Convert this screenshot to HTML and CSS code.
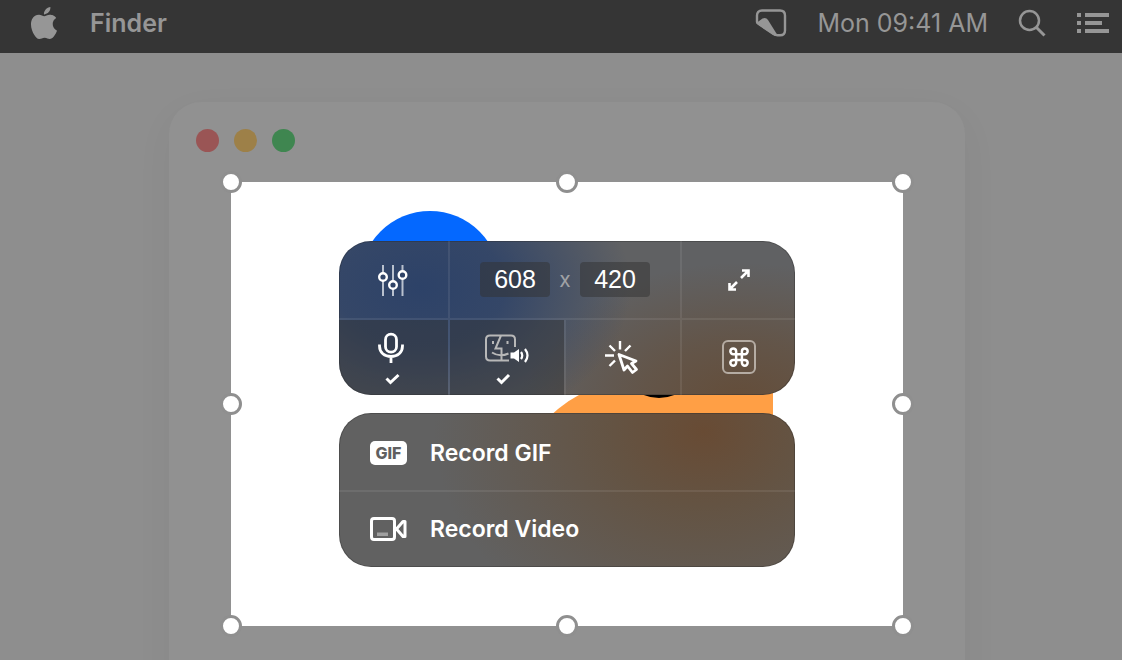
FILE: index.html
```html
<!DOCTYPE html>
<html lang="en">
<head>
    <meta charset="UTF-8">
    <meta name="viewport" content="width=device-width, initial-scale=1.0">
    <title>Screen recorder</title>
    <link rel="stylesheet" href="styles.css">
</head>
<body>
<header class="menubar">
    <button class="menu-item" type="button" aria-label="Apple menu">
        <svg width="28" height="32" viewBox="1.5 0 21 24">
            <path fill="currentColor" d="M12.152 6.896c-.948 0-2.415-1.078-3.96-1.04-2.04.027-3.91 1.183-4.961 3.014-2.117 3.675-.546 9.103 1.519 12.09 1.013 1.454 2.208 3.09 3.792 3.039 1.52-.065 2.09-.987 3.935-.987 1.831 0 2.35.987 3.96.948 1.637-.026 2.676-1.48 3.676-2.948 1.156-1.688 1.636-3.325 1.662-3.415-.039-.013-3.182-1.221-3.22-4.857-.026-3.04 2.48-4.494 2.597-4.559-1.429-2.09-3.623-2.324-4.39-2.376-2-.156-3.675 1.09-4.61 1.09zM15.53 3.83c.843-1.012 1.4-2.427 1.245-3.83-1.207.052-2.662.805-3.532 1.818-.78.896-1.454 2.338-1.273 3.714 1.338.104 2.715-.688 3.559-1.701"/>
        </svg>
    </button>
    <button class="menu-item app-name" type="button">Finder</button>
    <div class="status">
        <button class="menu-item" type="button" aria-label="Recorder">
            <svg width="32" height="28" viewBox="0 0 32 28">
                <path fill="none" stroke="currentColor" stroke-width="2.4" stroke-linejoin="round" d="M2 13V6.500Q2 1.500 7 1.500H25Q30 1.500 30 6.500V21.500Q30 26.300 25 26.300H22.500Q20.500 26.300 18.500 25L3 14.500Q2 14 2 13Z"/>
                <path fill="currentColor" d="M2 13.500L7.500 9.500Q11 8 13 11L23 27H20L3 15.500Z"/>
            </svg>
        </button>
        <time class="clock">Mon 09:41 AM</time>
        <button class="menu-item" type="button" aria-label="Search">
            <svg width="28" height="28" viewBox="0 0 28 28" fill="none" stroke="currentColor">
                <circle cx="11.500" cy="11.500" r="9.500" stroke-width="2.500"/>
                <path stroke-width="3" d="M18.500 18.500L26.500 26.500"/>
            </svg>
        </button>
        <button class="menu-item" type="button" aria-label="Notification centre">
            <svg width="34" height="20" viewBox="0 0 34 20" fill="currentColor">
                <path d="M1 0h4v4H1zM1 8h4v4H1zM1 16h4v4H1zM9 0h24v4H9zM9 8h17v4H9zM9 16h24v4H9z"/>
            </svg>
        </button>
    </div>
</header>

<main class="desktop">
    <section class="window">
        <div class="titlebar">
            <span class="light red"></span>
            <span class="light yellow"></span>
            <span class="light green"></span>
        </div>

        <div class="selection">
            <div class="artwork">
                <div class="blue-ball"></div>
                <div class="orange-shape"></div>
                <div class="black-dot"></div>
            </div>

            <div class="panel controls">
                <button class="cell" type="button" aria-label="Settings">
                    <svg width="34" height="34" viewBox="0 0 34 34" fill="none" stroke="#fff">
                        <path stroke="#b9c1ce" stroke-width="2" d="M6 2v8.500M6 17.500V33M16 2v16M16 25v8M25.500 2v6.500M25.500 15.500V33"/>
                        <circle cx="6" cy="14" r="3.800" stroke-width="2.400"/>
                        <circle cx="16" cy="22" r="3.800" stroke-width="2.400"/>
                        <circle cx="25.500" cy="12" r="3.800" stroke-width="2.400"/>
                    </svg>
                </button>
                <div class="cell size">
                    <input type="text" value="608" aria-label="Width">
                    <span class="times">x</span>
                    <input type="text" value="420" aria-label="Height">
                </div>
                <button class="cell" type="button" aria-label="Full screen">
                    <svg width="24" height="24" viewBox="0 0 24 24" fill="none" stroke="#fff" stroke-width="2.600">
                        <path d="M14 10L21 3M15 2.500H21.500V9M10 14L3 21M2.500 15V21.500H9"/>
                    </svg>
                </button>
                <button class="cell on" type="button" aria-label="Microphone" aria-pressed="true">
                    <svg width="32" height="54" viewBox="0 0 32 54" fill="none" stroke="#fff">
                        <rect x="7.500" y="3.200" width="11" height="18" rx="5.500" stroke-width="2.800"/>
                        <path stroke-width="2.800" d="M1.500 13.500V15C1.500 21.500 6.500 25.500 13 25.500S24.500 21.500 24.500 15V13.500M13 25.500V32"/>
                        <path stroke-width="3" d="M8.500 47.500L12.500 51.500L20.500 44"/>
                    </svg>
                </button>
                <button class="cell on" type="button" aria-label="System audio" aria-pressed="true">
                    <svg width="44" height="54" viewBox="0 0 44 54" fill="none" stroke="#b8b8b8">
                        <path stroke-width="2" d="M24 29.500H5Q1 29.500 1 25.500V8.500Q1 4.500 5 4.500H26Q30 4.500 30 8.500V16M16 4.500L10.500 17.500H16.500V29.500M7 21.500Q14.500 26.500 23.500 22.500M8 10v3M22.500 10v3"/>
                        <path fill="#fff" stroke="none" d="M25.500 21.500H29L34 18V31L29 27.500H25.500Z"/>
                        <path stroke="#fff" stroke-width="2.200" d="M36 21Q38.500 24.500 36 28M40 18Q45 24.500 40 31"/>
                        <path stroke="#fff" stroke-width="3" d="M12.500 47.500L16.500 51.500L24 44"/>
                    </svg>
                </button>
                <button class="cell" type="button" aria-label="Show clicks">
                    <svg width="38" height="34" viewBox="0 0 38 34" fill="none" stroke="#fff" stroke-width="2.400">
                        <path d="M16 0V8.500M5.500 4.500L11 10M26.500 4.500L21 10M1 14.500H10M5.500 25L11 19.500"/>
                        <path stroke-width="2.800" stroke-linejoin="round" d="M15 13.500L20 29L23.500 25L28.500 31.500L32.500 28.500L27.500 22.500L32 20Z"/>
                    </svg>
                </button>
                <button class="cell" type="button" aria-label="Show keystrokes">
                    <svg width="36" height="36" viewBox="0 0 36 36" fill="none">
                        <rect x="2" y="1" width="32" height="32" rx="5" stroke="#b5aca3" stroke-width="2"/>
                        <g transform="translate(6.500 5.500) scale(.96)">
                            <path stroke="#fff" stroke-width="2.600" d="M18 3a3 3 0 0 0-3 3v12a3 3 0 0 0 3 3 3 3 0 0 0 3-3 3 3 0 0 0-3-3H6a3 3 0 0 0-3 3 3 3 0 0 0 3 3 3 3 0 0 0 3-3V6a3 3 0 0 0-3-3 3 3 0 0 0-3 3 3 3 0 0 0 3 3h12a3 3 0 0 0 3-3 3 3 0 0 0-3-3z"/>
                        </g>
                    </svg>
                </button>
            </div>

            <div class="panel actions">
                <button class="action" type="button">
                    <span class="gif-badge" aria-hidden="true">GIF</span>
                    <span>Record GIF</span>
                </button>
                <button class="action" type="button">
                    <svg width="37" height="24" viewBox="0 0 37 24" fill="none">
                        <rect x="1.500" y="1.500" width="23" height="21" rx="2.500" stroke="#fff" stroke-width="3"/>
                        <path stroke="#fff" stroke-width="3" stroke-linejoin="round" d="M26.500 12L33 4.500H35V19.500H33Z"/>
                        <path fill="#a0a0a0" d="M7 15.500h11v3.500H7z"/>
                    </svg>
                    <span>Record Video</span>
                </button>
            </div>

            <span class="handle top left"></span>
            <span class="handle top center"></span>
            <span class="handle top right"></span>
            <span class="handle middle left"></span>
            <span class="handle middle right"></span>
            <span class="handle bottom left"></span>
            <span class="handle bottom center"></span>
            <span class="handle bottom right"></span>
        </div>
    </section>
</main>
</body>
</html>
```
FILE: styles.css
```css
* {
    box-sizing: border-box;
}

body {
    margin: 0;
    height: 100vh;
    display: flex;
    flex-direction: column;
    overflow: hidden;
    background: #8e8e8e;
    font-family: Inter, "Liberation Sans", sans-serif;
}

button {
    border: 0;
    padding: 0;
    background: none;
    color: inherit;
    font: inherit;
    cursor: pointer;
}

svg {
    display: block;
}

/* Menu bar */
.menubar {
    flex: none;
    display: flex;
    align-items: center;
    height: 53px;
    padding: 0 12px 8px 30px;
    background: #353535;
    color: #969696;
    font-size: 25px;
}

.app-name {
    margin-left: 32px;
    font-weight: 600;
}

.status {
    display: flex;
    align-items: center;
    gap: 30px;
    margin-left: auto;
}

/* Desktop */
.desktop {
    flex: 1;
    display: flex;
    padding: 49px 157px 0 169px;
}

.window {
    flex: 1;
    padding: 0 62px 62px;
    border-radius: 32px 32px 0 0;
    background: #919191;
    box-shadow: 0 12px 40px rgba(0, 0, 0, 0.04);
}

.titlebar {
    display: flex;
    gap: 15px;
    height: 80px;
    margin: 0 -35px;
    padding-top: 27px;
}

.light {
    width: 23px;
    height: 23px;
    border-radius: 50%;
}

.red {
    background: #9a5555;
}

.yellow {
    background: #9d8048;
}

.green {
    background: #3f8650;
}

/* Recording area */
.selection {
    position: relative;
    display: flex;
    flex-direction: column;
    gap: 18px;
    padding: 59px 108px;
    background: #fff;
}

.artwork {
    position: absolute;
    inset: 0;
    overflow: hidden;
}

.artwork div {
    position: absolute;
}

.blue-ball {
    top: 29px;
    left: 129px;
    width: 140px;
    height: 140px;
    border-radius: 50%;
    background: #0468ff;
}

.orange-shape {
    top: 197px;
    right: 130px;
    width: 262px;
    height: 140px;
    border-radius: 130px 0 0 0;
    background: #ff9f45;
}

.black-dot {
    top: 132px;
    left: 386px;
    width: 84px;
    height: 84px;
    border-radius: 50%;
    background: #000;
}

.panel {
    position: relative;
    display: grid;
    height: 154px;
    border-radius: 32px;
    overflow: hidden;
    color: #fff;
    box-shadow: inset 0 0 0 1px rgba(40, 40, 40, 0.35);
}

.controls {
    grid-template-columns: 111fr 116fr 116fr 113fr;
    grid-template-rows: 79px 75px;
    background:
        radial-gradient(ellipse 210px 150px at 18% 30%, #2d4268 0%, rgba(45, 66, 104, 0.85) 40%, rgba(65, 80, 104, 0) 100%),
        radial-gradient(ellipse 220px 140px at 88% 105%, #644d39 0%, rgba(100, 80, 62, 0.7) 45%, rgba(98, 88, 78, 0) 100%),
        #606163;
}

.cell {
    display: flex;
    align-items: center;
    justify-content: center;
    border: 0 solid rgba(255, 255, 255, 0.08);
    border-width: 0 2px 2px 0;
}

.cell:nth-child(3) {
    border-right-width: 0;
}

.cell:nth-child(n + 4) {
    border-bottom-width: 0;
}

.cell:last-child {
    border-right-width: 0;
}

.cell.on {
    background: rgba(50, 50, 50, 0.45);
    background-clip: padding-box;
}

.size {
    grid-column: span 2;
    gap: 8px;
}

.size input {
    width: 70px;
    height: 35px;
    padding: 0;
    border: 0;
    border-radius: 4px;
    background: rgba(50, 50, 50, 0.5);
    color: #fff;
    font: 25px "Liberation Sans", Arial, sans-serif;
    text-align: center;
}

.times {
    width: 14px;
    color: #a0a2a5;
    font-size: 21px;
    text-align: center;
}

.actions {
    grid-template-rows: 79px 75px;
    background:
        radial-gradient(ellipse 270px 220px at 80% 12%, #684b34 0%, rgba(100, 82, 64, 0.9) 35%, rgba(98, 88, 78, 0) 100%),
        #616161;
}

.action {
    display: flex;
    align-items: center;
    gap: 23px;
    padding: 3px 31px 0;
    font-size: 23px;
    font-weight: 600;
}

.action:first-child {
    border-bottom: 2px solid rgba(255, 255, 255, 0.08);
}

.action:last-child {
    padding: 0 31px 2px;
}

.gif-badge {
    width: 37px;
    border-radius: 5px;
    background: #fff;
    color: #606060;
    font-size: 16px;
    font-weight: 800;
    line-height: 24px;
    text-align: center;
}

/* Resize handles sit on the edge of the recording area */
.handle {
    position: absolute;
    width: 22px;
    height: 22px;
    border: 3px solid #8f8f8f;
    border-radius: 50%;
    background: #fff;
    transform: translate(-50%, -50%);
}

.top {
    top: 0;
}

.middle {
    top: 50%;
}

.bottom {
    top: 100%;
}

.left {
    left: 0;
}

.center {
    left: 50%;
}

.right {
    left: 100%;
}
```
